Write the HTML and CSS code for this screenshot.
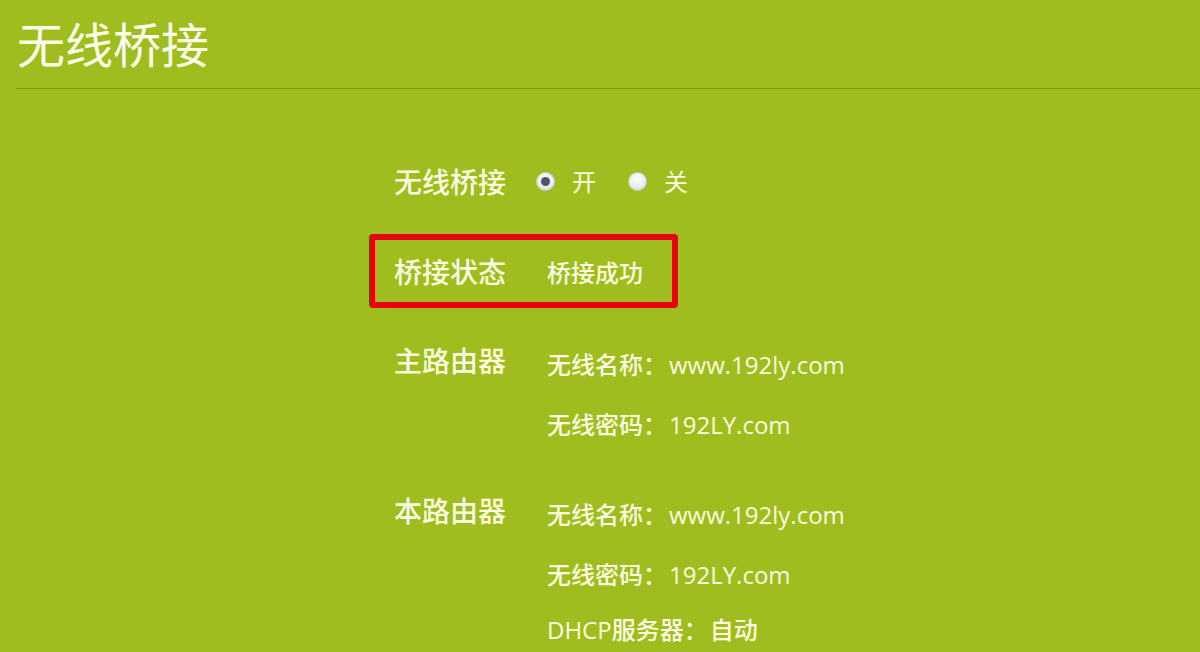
FILE: index.html
```html
<!DOCTYPE html>
<html lang="zh-CN">
<head>
<meta charset="utf-8">
<link rel="stylesheet" href="styles.css">
</head>
<body>
<div class="page">
  <div class="header"><h1 class="title">无线桥接</h1></div>
  <div class="form">
    <div class="row row-switch">
      <div class="label">无线桥接</div>
      <div class="radios">
        <span class="radio checked"></span><span class="opt">开</span>
        <span class="radio"></span><span class="opt">关</span>
      </div>
    </div>
    <div class="status-box">
      <div class="label">桥接状态</div>
      <div class="value">桥接成功</div>
    </div>
    <div class="group group-main">
      <div class="label">主路由器</div>
      <div class="values">
        <div class="value">无线名称<span class="colon">：</span>www.192ly.com</div>
        <div class="value">无线密码<span class="colon">：</span>192LY.com</div>
      </div>
    </div>
    <div class="group group-local">
      <div class="label">本路由器</div>
      <div class="values">
        <div class="value">无线名称<span class="colon">：</span>www.192ly.com</div>
        <div class="value">无线密码<span class="colon">：</span>192LY.com</div>
        <div class="value last">DHCP服务器<span class="colon">：</span>自动</div>
      </div>
    </div>
  </div>
</div>
</body>
</html>
```

FILE: styles.css
```css
html, body {
  margin: 0;
  padding: 0;
}
body {
  width: 1200px;
  height: 652px;
  overflow: hidden;
  background: #a0bd1f;
  color: #fbfbdf;
  font-family: "Open Sans", "Noto Sans CJK SC", sans-serif;
}
.page {
  height: 652px;
}
.header {
  margin-left: 16px;
  height: 88px;
  border-bottom: 1px solid #819b16;
}
.title {
  margin: 0;
  padding-top: 12px;
  padding-left: 1px;
  font-size: 48px;
  line-height: 60px;
  font-weight: 400;
  color: #fbfde8;
  font-family: "Noto Sans CJK SC", sans-serif;
}
.form {
  padding-left: 394px;
}
.label {
  width: 153px;
  flex: none;
  font-size: 28px;
  font-weight: 500;
  font-family: "Noto Sans CJK SC", sans-serif;
}
.value {
  font-size: 24px;
  font-weight: 500;
}
.colon {
  font-family: "Noto Sans CJK JP", sans-serif;
  margin-right: 2px;
  line-height: 1;
}
.row-switch {
  display: flex;
  margin-top: 72px;
  height: 40px;
  line-height: 40px;
}
.radios {
  display: flex;
  align-items: center;
  margin-left: -11px;
}
.radio {
  box-sizing: border-box;
  width: 19px;
  height: 19px;
  border-radius: 50%;
  border: 1px solid #c9cccf;
  background: radial-gradient(circle at 50% 35%, #ffffff 0%, #eceef0 55%, #cdd1d5 100%);
  display: flex;
  align-items: center;
  justify-content: center;
}
.radio.checked::after {
  content: "";
  width: 9px;
  height: 9px;
  border-radius: 50%;
  background: #4b5468;
}
.opt {
  font-size: 24px;
  margin-left: 17px;
  margin-right: 32px;
  font-family: "Noto Sans CJK SC", sans-serif;
}
.status-box {
  display: flex;
  align-items: center;
  box-sizing: border-box;
  margin-top: 33px;
  margin-left: -25px;
  width: 309px;
  height: 74px;
  padding-left: 19px;
  border: 6px solid #e8040e;
  border-radius: 4px;
}
.status-box .label {
  line-height: 62px;
}
.status-box .value {
  font-family: "Noto Sans CJK SC", sans-serif;
}
.group {
  display: flex;
  align-items: flex-start;
}
.group .label {
  line-height: 50px;
}
.group .value {
  height: 60px;
  line-height: 60px;
}
.group .value.last {
  height: 50px;
  line-height: 50px;
}
.group-main {
  margin-top: 27px;
}
.group-local {
  margin-top: 30px;
}
```
